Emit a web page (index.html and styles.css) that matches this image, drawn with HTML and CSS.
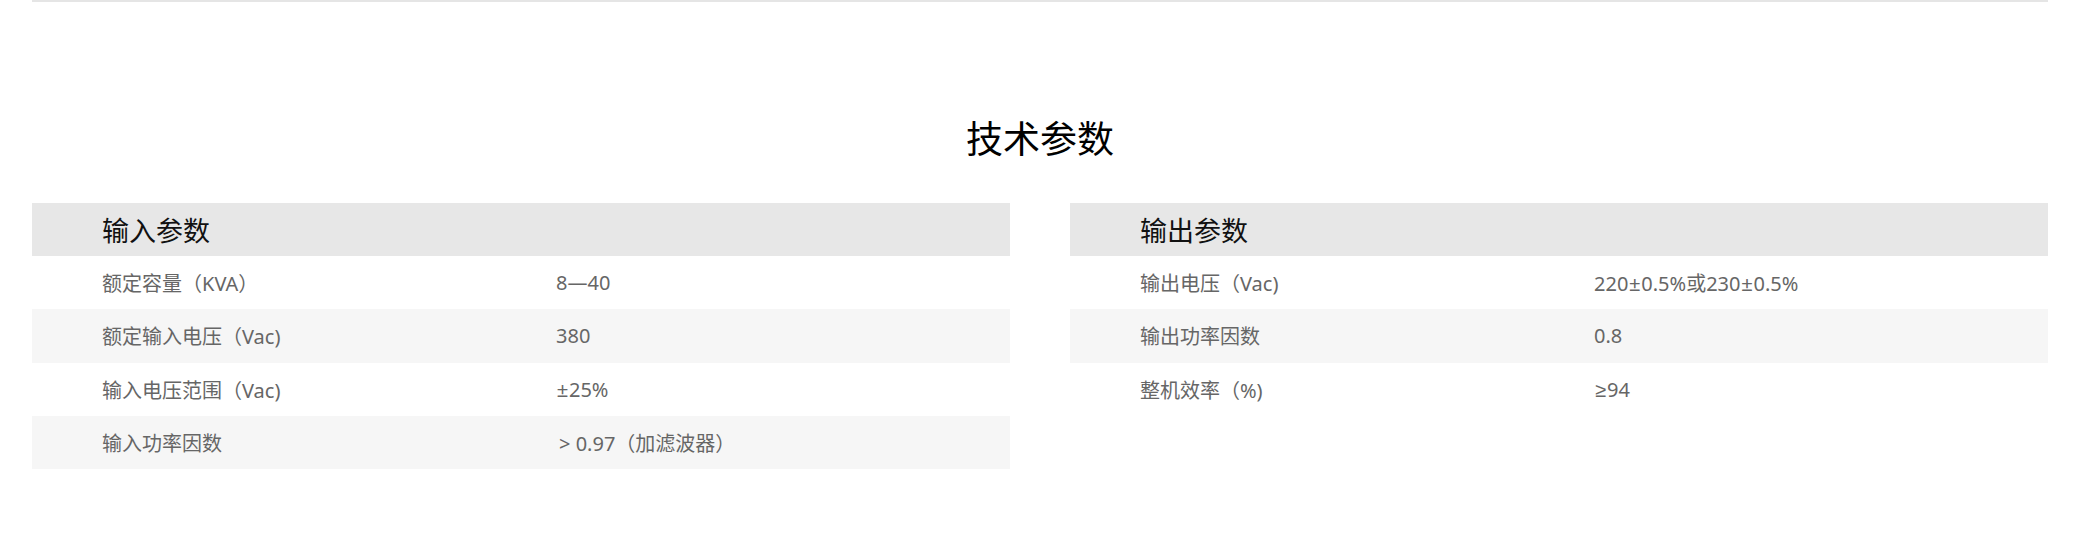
FILE: index.html
```html
<!DOCTYPE html>
<html lang="zh-CN">
<head>
<meta charset="utf-8">
<title>技术参数</title>
<link rel="stylesheet" href="styles.css">
</head>
<body>
<div class="page">
  <div class="divider"></div>
  <h2 class="title">技术参数</h2>
  <div class="tables">
    <div class="table">
      <div class="row head"><div class="label">输入参数</div></div>
      <div class="row"><div class="label">额定容量（KVA）</div><div class="value">8—40</div></div>
      <div class="row alt"><div class="label">额定输入电压（Vac)</div><div class="value">380</div></div>
      <div class="row"><div class="label">输入电压范围（Vac)</div><div class="value"><span class="math">±</span>25%</div></div>
      <div class="row alt"><div class="label">输入功率因数</div><div class="value indent">&gt; 0.97（加滤波器）</div></div>
    </div>
    <div class="table">
      <div class="row head"><div class="label">输出参数</div></div>
      <div class="row"><div class="label">输出电压（Vac)</div><div class="value">220<span class="math">±</span>0.5%或230<span class="math">±</span>0.5%</div></div>
      <div class="row alt"><div class="label">输出功率因数</div><div class="value">0.8</div></div>
      <div class="row"><div class="label">整机效率（%)</div><div class="value"><span class="math">≥</span>94</div></div>
    </div>
  </div>
</div>
</body>
</html>
```
FILE: styles.css
```css
html, body {
  margin: 0;
  padding: 0;
  background: #ffffff;
}
body {
  font-family: "Noto Sans", "Noto Sans CJK SC", sans-serif;
}
.page {
  width: 2016px;
  margin-left: 32px;
}
.divider {
  height: 2px;
  background: #e5e5e5;
}
.title {
  margin: 110px 0 41px;
  height: 50px;
  line-height: 50px;
  font-size: 37px;
  font-weight: normal;
  text-align: center;
  color: #000;
  font-family: "Noto Sans CJK SC", sans-serif;
}
.tables {
  display: flex;
  gap: 60px;
  align-items: flex-start;
}
.table {
  width: 978px;
  display: flex;
  flex-direction: column;
}
.row {
  height: 53.2px;
  display: flex;
  align-items: center;
  font-size: 20px;
  color: #666;
}
.row.alt {
  background: #f6f6f6;
}
.row.head {
  background: #e7e7e7;
  font-size: 27px;
  color: #111;
  font-family: "Noto Sans CJK SC", sans-serif;
}
.label {
  width: 454px;
  padding-left: 70px;
}
.indent {
  padding-left: 3px;
}
.math {
  font-family: "Liberation Sans", sans-serif;
  padding: 0 1px;
}
```
